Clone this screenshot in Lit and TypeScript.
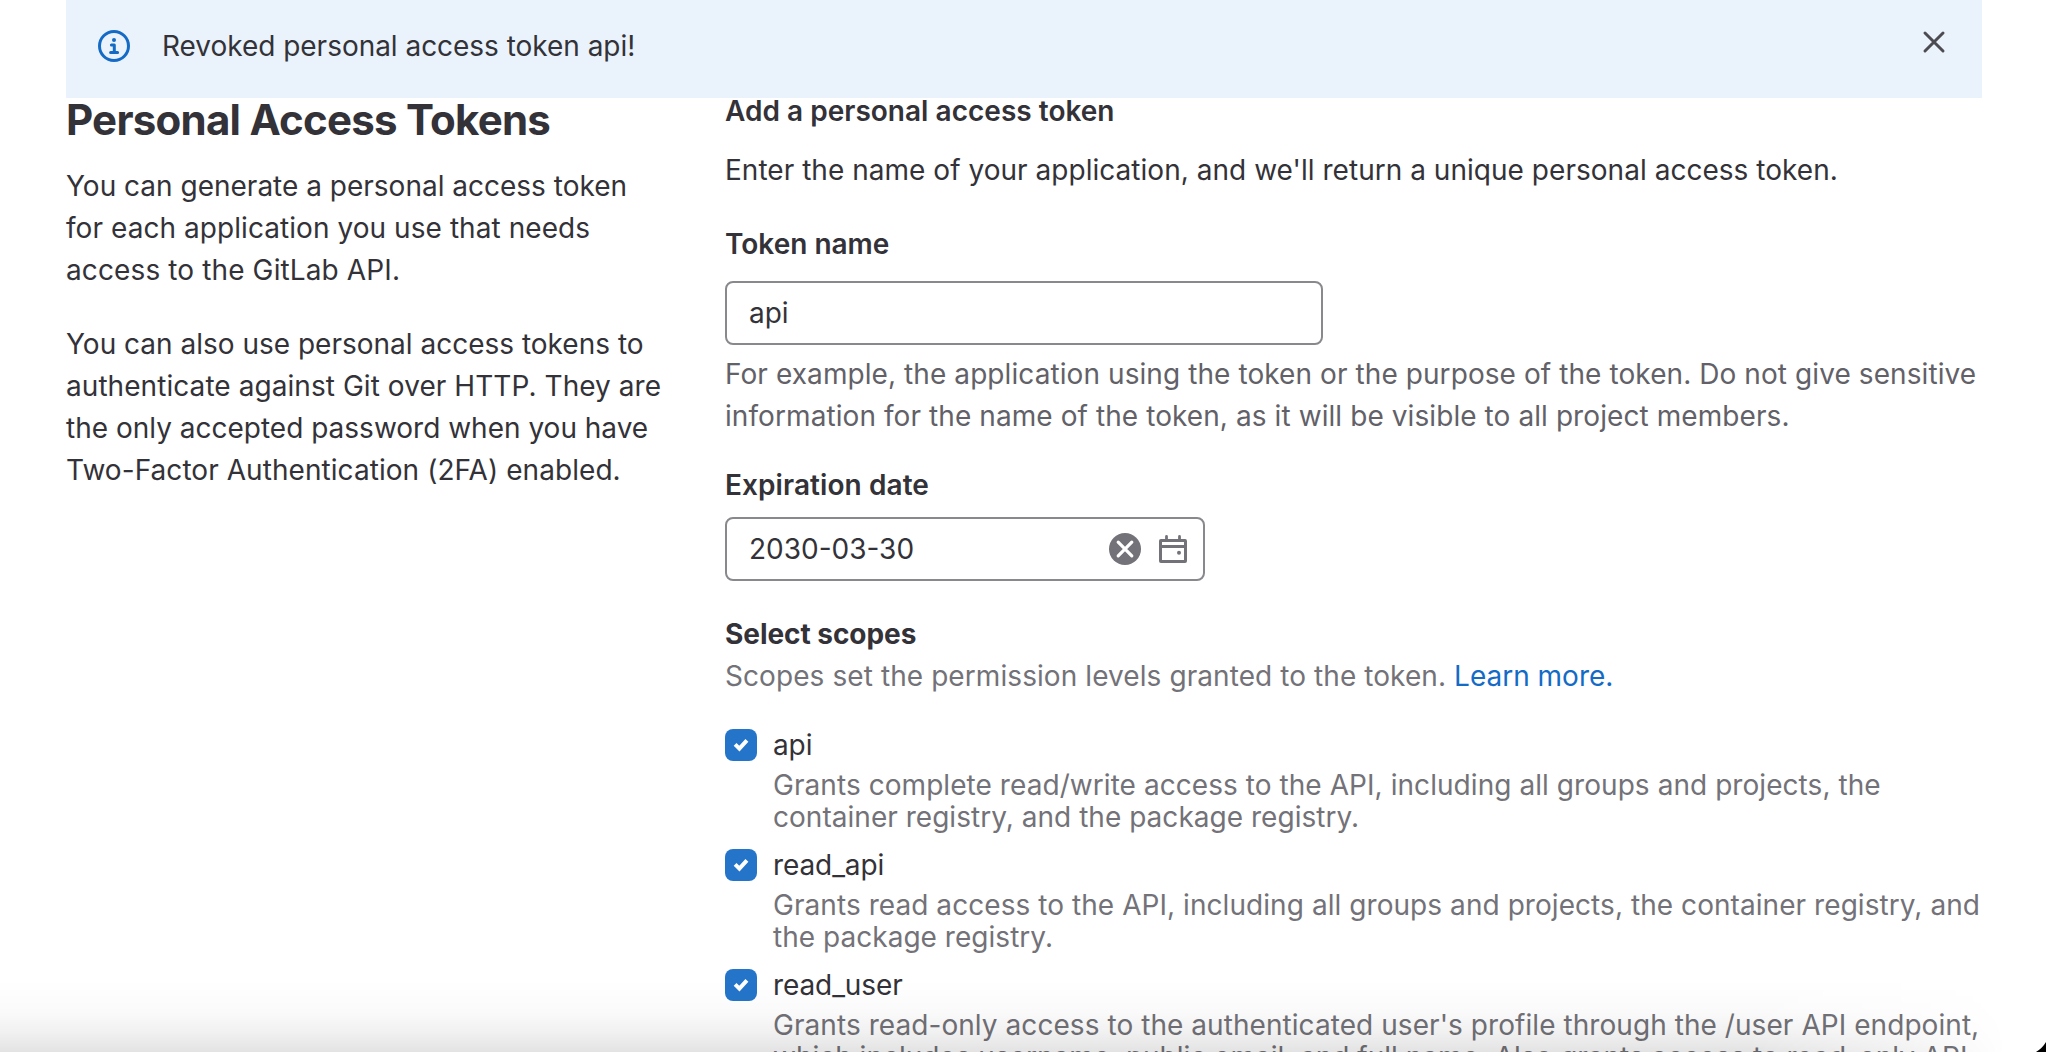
import { LitElement, html, css } from "lit";
import { customElement } from "lit/decorators.js";

interface Line {
  text: string;
  tracking: string;
}

interface Scope {
  name: string;
  description: Line[];
}

const SCOPES: Scope[] = [
  {
    name: "api",
    description: [
      { text: "Grants complete read/write access to the API, including all groups and projects, the", tracking: "t6" },
      { text: "container registry, and the package registry.", tracking: "t3" },
    ],
  },
  {
    name: "read_api",
    description: [
      { text: "Grants read access to the API, including all groups and projects, the container registry, and", tracking: "t6" },
      { text: "the package registry.", tracking: "t3" },
    ],
  },
  {
    name: "read_user",
    description: [
      { text: "Grants read-only access to the authenticated user's profile through the /user API endpoint,", tracking: "t6" },
      { text: "which includes username, public email, and full name. Also grants access to read-only API", tracking: "t0" },
    ],
  },
];

@customElement("app-root")
export class AppRoot extends LitElement {
  static styles = css`
    :host {
      display: block;
      position: relative;
      height: 1052px;
      overflow: hidden;
      background: #fff;
      color: #333238;
      font-family: Inter, "Liberation Sans", sans-serif;
      font-size: 28px;
      line-height: 42px;
    }
    * { box-sizing: border-box; }
    h1, h2, h3, p { margin: 0; }
    svg { display: block; flex: none; }
    .line { display: block; white-space: nowrap; }
    .t0 { letter-spacing: -0.01px; }
    .t3 { letter-spacing: 0.03px; }
    .t6 { letter-spacing: 0.06px; }
    .t8 { letter-spacing: 0.08px; }
    .t12 { letter-spacing: 0.12px; }
    .alert {
      display: flex;
      align-items: flex-start;
      height: 98px;
      margin: 0 64px 0 66px;
      padding: 25px 32px 0;
      background: #eaf2fc;
    }
    .alert-icon { margin-top: 5px; color: #146bc6; }
    .alert-text { flex: 1; margin-left: 32px; white-space: nowrap; letter-spacing: -0.03px; }
    .alert-close { margin-top: 1px; color: #4c4b51; }
    .columns { display: flex; padding-left: 66px; }
    .intro { width: 659px; flex: none; }
    .title { font-size: 42px; line-height: 44px; font-weight: 650; letter-spacing: -0.75px; white-space: nowrap; }
    .intro p { margin-top: 23px; }
    .intro p + p { margin-top: 32px; }
    .form { width: 1260px; flex: none; }
    h2, h3 { font-size: 28px; font-weight: 600; line-height: 42px; }
    .form-title { margin-top: 1px; line-height: 24px; letter-spacing: 0.02px; }
    .lead { margin-top: 26px; }
    .name-label { margin-top: 32px; }
    .field {
      display: flex;
      align-items: center;
      height: 64px;
      padding: 0 14px 0 22px;
      border: 2px solid #89888d;
      border-radius: 8px;
    }
    .name-field { width: 598px; margin-top: 16px; }
    .date-field { width: 480px; margin-top: 11px; }
    .value { flex: 1; }
    .icons { display: flex; gap: 16px; color: #737278; }
    .help { margin-top: 8px; color: #626168; }
    .date-label { margin-top: 27px; letter-spacing: 0.08px; }
    .scopes-label { margin-top: 32px; font-weight: 700; letter-spacing: -0.05px; }
    .muted { color: #737278; }
    .link { color: #146bc6; letter-spacing: 0; }
    .scopes { display: grid; gap: 16px; margin-top: 32px; line-height: 32px; }
    .scope { display: grid; grid-template-columns: 32px 1fr; column-gap: 16px; row-gap: 8px; }
    .scope-name { letter-spacing: -0.1px; }
    .scope-text { grid-column: 2; color: #737278; }
    .box {
      width: 32px;
      height: 32px;
      border-radius: 8px;
      background: #2475ca;
    }
    .shade {
      position: absolute;
      inset: auto 0 0 0;
      height: 72px;
      background: linear-gradient(
        to bottom,
        rgba(0, 0, 0, 0),
        rgba(0, 0, 0, 0.02) 45%,
        rgba(0, 0, 0, 0.055) 72%,
        rgba(0, 0, 0, 0.11)
      );
      mask-image: linear-gradient(to left, transparent 40px, rgba(0, 0, 0, 0.45) 130px, #000 300px);
      pointer-events: none;
    }
    .corner { position: absolute; right: 0; bottom: 0; }
  `;

  private renderScope(scope: Scope) {
    return html`
      <div class="scope">
        <span class="box">
          <svg width="32" height="32" viewBox="0 0 32 32" fill="none" stroke="#fff" stroke-width="4">
            <path d="M10.1 15.4 14.4 19.6 21.9 11.3" />
          </svg>
        </span>
        <span class="scope-name">${scope.name}</span>
        <div class="scope-text">
          ${scope.description.map((line) => html`<span class="line ${line.tracking}">${line.text}</span>`)}
        </div>
      </div>
    `;
  }

  render() {
    return html`
      <div class="alert">
        <svg class="alert-icon" width="32" height="32" viewBox="0 0 16 16" fill="none" stroke="currentColor">
          <circle cx="8" cy="8" r="7.25" stroke-width="1.5" />
          <circle cx="8" cy="4.95" r="1" fill="currentColor" stroke="none" />
          <path d="M6.7 7.5H8.15V11.1M6.3 11.2H9.8" stroke-width="1.5" stroke-linecap="round" stroke-linejoin="round" />
        </svg>
        <span class="alert-text">Revoked personal access token api!</span>
        <svg class="alert-close" width="32" height="32" viewBox="0 0 16 16" fill="none" stroke="currentColor">
          <path d="M3.5 3.5 12.5 12.5M12.5 3.5 3.5 12.5" stroke-width="1.5" stroke-linecap="round" />
        </svg>
      </div>
      <div class="columns">
        <div class="intro">
          <h1 class="title">Personal Access Tokens</h1>
          <p>
            <span class="line">You can generate a personal access token</span>
            <span class="line t6">for each application you use that needs</span>
            <span class="line t12">access to the GitLab API.</span>
          </p>
          <p>
            <span class="line">You can also use personal access tokens to</span>
            <span class="line t6">authenticate against Git over HTTP. They are</span>
            <span class="line">the only accepted password when you have</span>
            <span class="line t6">Two-Factor Authentication (2FA) enabled.</span>
          </p>
        </div>
        <div class="form">
          <h2 class="form-title">Add a personal access token</h2>
          <p class="lead line t3">Enter the name of your application, and we'll return a unique personal access token.</p>
          <h3 class="name-label">Token name</h3>
          <div class="field name-field"><span class="value">api</span></div>
          <p class="help">
            <span class="line t8">For example, the application using the token or the purpose of the token. Do not give sensitive</span>
            <span class="line t8">information for the name of the token, as it will be visible to all project members.</span>
          </p>
          <h3 class="date-label">Expiration date</h3>
          <div class="field date-field">
            <span class="value">2030-03-30</span>
            <span class="icons">
              <svg width="32" height="32" viewBox="0 0 16 16">
                <circle cx="8" cy="8" r="8" fill="currentColor" />
                <path d="M4.6 4.6 11.4 11.4M11.4 4.6 4.6 11.4" stroke="#fff" stroke-width="1.6" stroke-linecap="round" />
              </svg>
              <svg width="32" height="32" viewBox="0 0 16 16" fill="none" stroke="currentColor" stroke-width="1.5">
                <rect x="1.75" y="3.75" width="12.5" height="10.5" rx="0.2" stroke-linejoin="round" />
                <path d="M1.75 6.75H14.25" />
                <path d="M4.75 3.5V1.7M11.25 3.5V1.7" stroke-linecap="round" stroke-width="1.4" />
                <circle cx="11" cy="9.9" r="1" fill="currentColor" stroke="none" />
              </svg>
            </span>
          </div>
          <h3 class="scopes-label">Select scopes</h3>
          <p class="muted line t8">Scopes set the permission levels granted to the token. <span class="link">Learn more.</span></p>
          <div class="scopes">${SCOPES.map((scope) => this.renderScope(scope))}</div>
        </div>
      </div>
      <div class="shade"></div>
      <svg class="corner" width="10" height="10" viewBox="0 0 10 10">
        <path d="M10 0Q6.5 6 0 10H10Z" fill="#000" />
      </svg>
    `;
  }
}
